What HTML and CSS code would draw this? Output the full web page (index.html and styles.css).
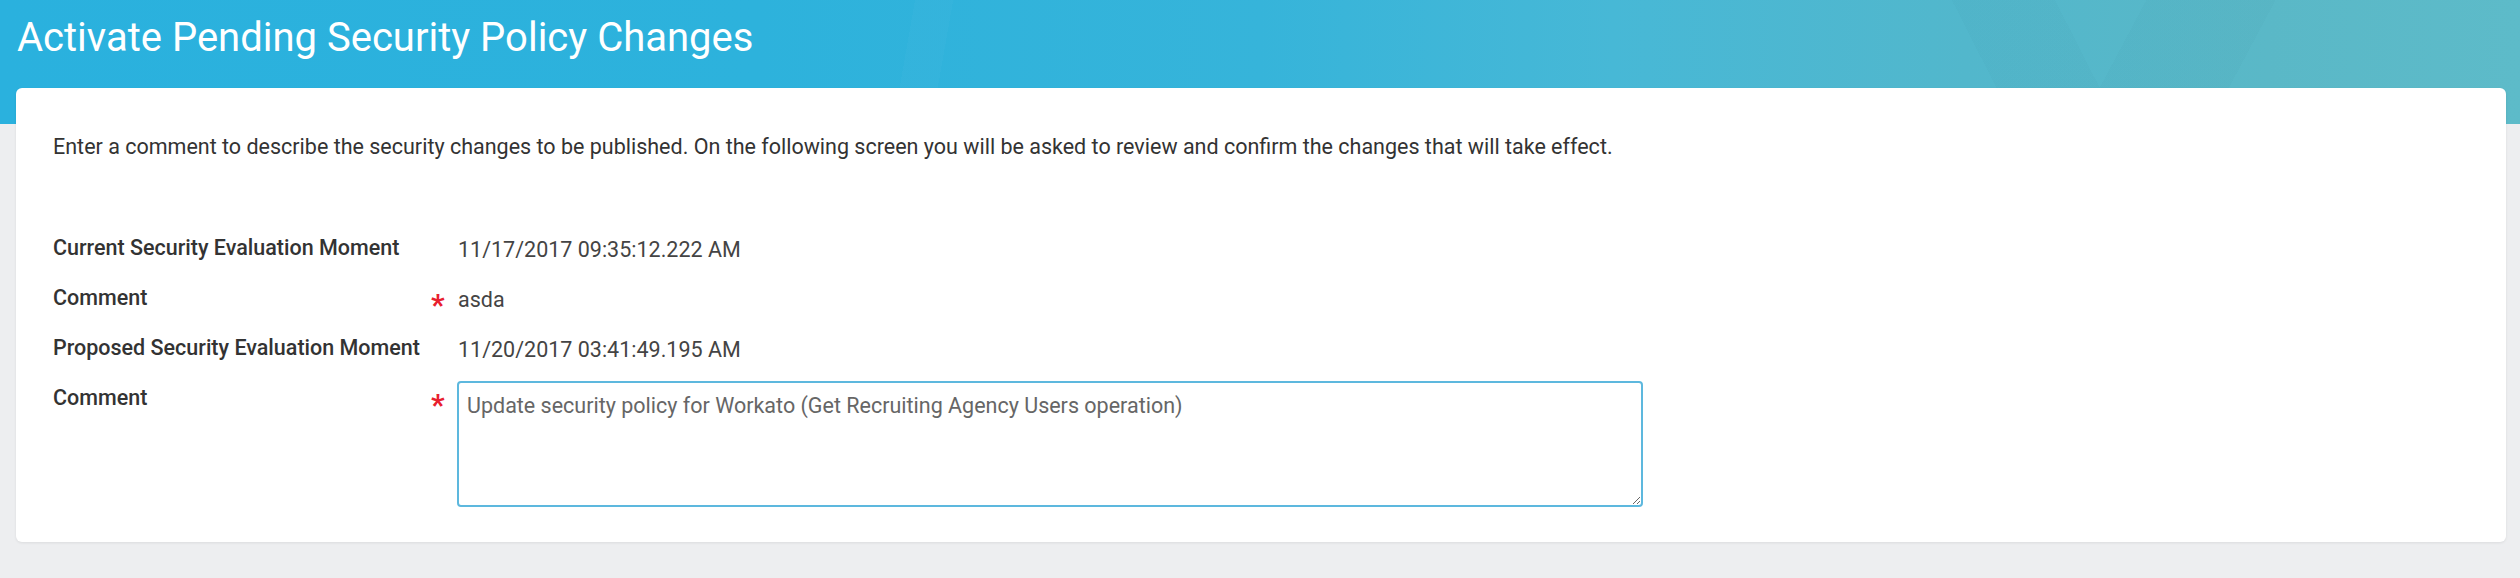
FILE: index.html
```html
<!DOCTYPE html>
<html lang="en">
<head>
<meta charset="utf-8">
<title>Activate Pending Security Policy Changes</title>
<link rel="stylesheet" href="styles.css">
</head>
<body>
<header class="header">
  <h1 class="title">Activate Pending Security Policy Changes</h1>
</header>
<main class="card">
  <p class="intro">Enter a comment to describe the security changes to be published. On the following screen you will be asked to review and confirm the changes that will take effect.</p>
  <div class="form">
    <div class="label">Current Security Evaluation Moment</div>
    <div class="req"></div>
    <div class="value">11/17/2017 09:35:12.222 AM</div>

    <div class="label">Comment</div>
    <div class="req">*</div>
    <div class="value">asda</div>

    <div class="label">Proposed Security Evaluation Moment</div>
    <div class="req"></div>
    <div class="value">11/20/2017 03:41:49.195 AM</div>

    <div class="label">Comment</div>
    <div class="req">*</div>
    <div class="value"><textarea class="comment">Update security policy for Workato (Get Recruiting Agency Users operation)</textarea></div>
  </div>
</main>
</body>
</html>
```

FILE: styles.css
```css
html, body {
  margin: 0;
  padding: 0;
}
body {
  background: #edeef0;
  font-family: Roboto, "Liberation Sans", sans-serif;
  color: #333;
  height: 578px;
  overflow: hidden;
}
.header {
  height: 124px;
  box-sizing: border-box;
  padding: 16px 16px 0 17px;
  background:
    linear-gradient(100deg, rgba(255,255,255,0) 0 36%, rgba(255,255,255,0.02) 36% 37.5%, rgba(255,255,255,0) 37.5%),
    linear-gradient(63deg, rgba(0,0,0,0) 0 78%, rgba(0,50,70,0.018) 78% 82%, rgba(0,0,0,0) 82%),
    linear-gradient(118deg, rgba(0,0,0,0) 0 83%, rgba(0,50,70,0.02) 83% 88%, rgba(0,0,0,0) 88%),
    linear-gradient(90deg, #2ab1de 0%, #2db2dc 30%, #36b4da 50%, #47b8d6 64%, #52b7cc 78%, #5ab8c7 90%, #5dbbc9 100%);
}
.title {
  margin: 0;
  font-size: 40px;
  line-height: 44px;
  font-weight: 400;
  color: #fff;
}
.card {
  margin: -36px 14px 0 16px;
  background: #fff;
  border-radius: 6px;
  box-shadow: 0 1px 3px rgba(0,0,0,0.08);
  padding: 46px 37px 35px;
}
.intro {
  margin: 0 0 76px;
  font-size: 21.5px;
  line-height: 25px;
  color: #333;
}
.form {
  display: grid;
  grid-template-columns: 375px 30px 1fr;
  grid-auto-rows: minmax(50px, auto);
  font-size: 21.5px;
  line-height: 25px;
}
.label {
  font-weight: 500;
  color: #333;
}
.req {
  color: #e8202e;
  font-size: 30px;
  font-weight: 700;
  line-height: 25px;
  padding-left: 3px;
  padding-top: 7px;
}
.value {
  color: #444;
  padding-top: 2px;
}
.comment {
  display: block;
  box-sizing: border-box;
  width: 1186px;
  height: 126px;
  margin: -6px 0 0 -1px;
  border: 2px solid #5db8de;
  border-radius: 4px;
  padding: 10px 8px;
  font-family: Roboto, "Liberation Sans", sans-serif;
  font-size: 21.5px;
  line-height: 25px;
  color: #666;
  outline: none;
  resize: both;
}
```
